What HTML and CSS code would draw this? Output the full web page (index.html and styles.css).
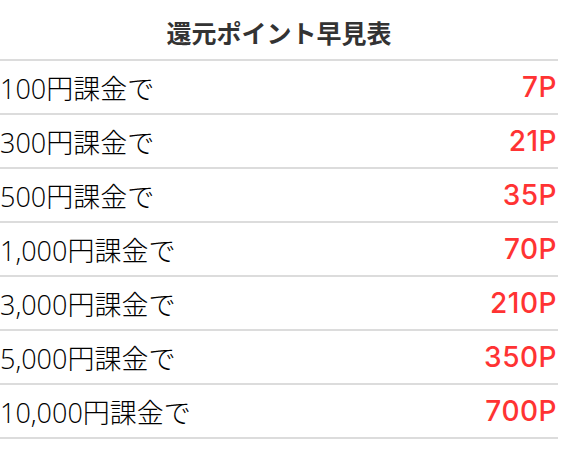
FILE: index.html
```html
<!DOCTYPE html>
<html lang="ja">
<head>
<meta charset="utf-8">
<link rel="stylesheet" href="styles.css">
</head>
<body>
<div class="table">
  <div class="title">還元ポイント早見表</div>
  <div class="row"><span class="label">100円課金で</span><span class="value">7P</span></div>
  <div class="row"><span class="label">300円課金で</span><span class="value">21P</span></div>
  <div class="row"><span class="label">500円課金で</span><span class="value">35P</span></div>
  <div class="row"><span class="label">1,000円課金で</span><span class="value">70P</span></div>
  <div class="row"><span class="label">3,000円課金で</span><span class="value">210P</span></div>
  <div class="row"><span class="label">5,000円課金で</span><span class="value">350P</span></div>
  <div class="row"><span class="label">10,000円課金で</span><span class="value">700P</span></div>
</div>
</body>
</html>
```

FILE: styles.css
```css
html, body {
  margin: 0;
  padding: 0;
  background: #ffffff;
}
.table {
  width: 558px;
  font-family: "Noto Sans CJK JP", "Noto Sans", sans-serif;
}
.title {
  height: 54px;
  padding-top: 5px;
  line-height: 54px;
  text-align: center;
  font-size: 25px;
  font-weight: 700;
  color: #333333;
  border-bottom: 2px solid #dcdcdc;
}
.row {
  height: 52px;
  display: flex;
  align-items: center;
  justify-content: space-between;
  border-bottom: 2px solid #dcdcdc;
}
.label {
  font-family: "Open Sans", "Noto Sans CJK JP", sans-serif;
  font-size: 27px;
  font-weight: 300;
  color: #000000;
}
.value {
  font-family: Inter, "Liberation Sans", sans-serif;
  font-size: 28px;
  font-weight: 500;
  color: #ff3333;
  letter-spacing: 0.5px;
  padding-right: 1px;
}
```
